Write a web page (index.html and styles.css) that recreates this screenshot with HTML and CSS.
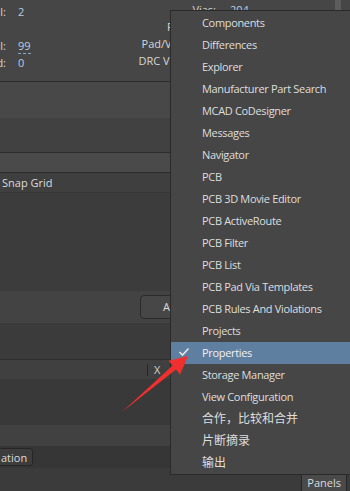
FILE: index.html
```html
<!DOCTYPE html>
<html lang="en">
<head>
  <meta charset="UTF-8">
  <meta name="viewport" content="width=device-width, initial-scale=1.0">
  <title>Panels</title>
  <link rel="stylesheet" href="styles.css">
</head>
<body>
  <div class="panel">
    <div class="info">
      <div class="info-left">
        <span class="label"></span><span class="value">--</span>
        <span class="label">Total:</span><span class="value">2</span>
        <span class="label"></span><span class="value"></span>
        <span class="label">Total:</span><span class="value"><span class="link">99</span></span>
        <span class="label">Routed:</span><span class="value">0</span>
      </div>
      <div class="info-right">
        <span class="label">Vias:</span><span class="value">204</span>
        <span class="label">Polygons:</span><span class="value"></span>
        <span class="label">Pad/Via Types:</span><span class="value"></span>
        <span class="label">DRC Violations:</span><span class="value"></span>
      </div>
      <div class="scroll-thumb"></div>
    </div>
    <div class="band band-a"></div>
    <div class="band band-b"></div>
    <div class="band section-head"></div>
    <div class="band snap-row">Snap Grid</div>
    <div class="band area"></div>
    <div class="band button-band">
      <div class="btn">Add</div>
    </div>
    <div class="band area2"></div>
    <div class="band input-row">
      <span class="input-sep"></span>
      <span class="input-clear">X</span>
    </div>
    <div class="band area3"></div>
    <div class="band band-c"></div>
    <div class="band tab-row">
      <div class="tab">ation</div>
    </div>
    <div class="status-bar">
      <div class="panels-btn">Panels</div>
    </div>
  </div>

  <!-- Panels popup menu -->
  <div class="menu">
    <div class="menu-item">Components</div>
    <div class="menu-item">Differences</div>
    <div class="menu-item">Explorer</div>
    <div class="menu-item">Manufacturer Part Search</div>
    <div class="menu-item">MCAD CoDesigner</div>
    <div class="menu-item">Messages</div>
    <div class="menu-item">Navigator</div>
    <div class="menu-item">PCB</div>
    <div class="menu-item">PCB 3D Movie Editor</div>
    <div class="menu-item">PCB ActiveRoute</div>
    <div class="menu-item">PCB Filter</div>
    <div class="menu-item">PCB List</div>
    <div class="menu-item">PCB Pad Via Templates</div>
    <div class="menu-item">PCB Rules And Violations</div>
    <div class="menu-item">Projects</div>
    <div class="menu-item checked">
      <svg class="check" width="12" height="10" viewBox="0 0 12 10">
        <polyline points="1.5,5 4.5,8 10.5,1.5" fill="none" stroke="#e6e6e6" stroke-width="1.6"/>
      </svg>
      Properties
    </div>
    <div class="menu-item">Storage Manager</div>
    <div class="menu-item">View Configuration</div>
    <div class="menu-item cjk">合作，比较和合并</div>
    <div class="menu-item cjk">片断摘录</div>
    <div class="menu-item cjk">输出</div>
  </div>

  <!-- 红色箭头标注 -->
  <svg class="arrow" width="350" height="491" viewBox="0 0 350 491">
    <polygon points="122,412 172.6,365.6 168.5,360.7 188,356 180.1,374.5 176,369.6" fill="#f0302e"/>
  </svg>
</body>
</html>
```

FILE: styles.css
```css
body {
  margin: 0;
  width: 350px;
  height: 491px;
  overflow: hidden;
  position: relative;
  background-color: #3b3b3b;
  font-family: "Open Sans", "Noto Sans", sans-serif;
  font-size: 11px;
  color: #dcdcdc;
}
.panel {
  display: flex;
  flex-direction: column;
  height: 491px;
}
.info {
  position: relative;
  display: flex;
  height: 81px;
  overflow: hidden;
  background-color: #464646;
  border-bottom: 1px solid #2c2c2c;
}
.info-left {
  display: grid;
  grid-template-columns: 50px 80px;
  grid-auto-rows: 17px;
  column-gap: 12px;
  align-items: center;
  margin-left: -44px;
  margin-top: -14px;
  width: 140px;
  flex-shrink: 0;
}
.info-right {
  display: grid;
  grid-template-columns: 90px 60px;
  grid-auto-rows: 17px;
  column-gap: 14px;
  align-items: center;
  margin-left: 30px;
  padding-top: 1px;
}
.label {
  text-align: right;
  white-space: nowrap;
  color: #d6d6d6;
}
.value {
  color: #b9cde2;
}
.link {
  border-bottom: 1px dashed #8aa7c6;
}
.scroll-thumb {
  position: absolute;
  right: 9px;
  top: 0;
  width: 6px;
  height: 20px;
  background-color: #5c5c5c;
}
.band {
  flex-shrink: 0;
}
.band-a {
  height: 36px;
  background-color: #484848;
}
.band-b {
  height: 34px;
  background-color: #414141;
  border-bottom: 1px solid #2c2c2c;
}
.section-head {
  height: 19px;
  background-color: #4a4a4a;
  border-bottom: 1px solid #2c2c2c;
}
.snap-row {
  height: 19px;
  line-height: 19px;
  padding-left: 2px;
  background-color: #3f3f3f;
  border-bottom: 1px solid #373737;
}
.area {
  height: 98px;
  background-color: #3c3c3c;
}
.button-band {
  height: 32px;
  background-color: #434343;
  display: flex;
  align-items: center;
  padding-left: 140px;
}
.btn {
  width: 100px;
  height: 24px;
  line-height: 22px;
  padding-left: 22px;
  box-sizing: border-box;
  border: 1px solid #2b2b2b;
  border-radius: 4px;
  background-color: #474747;
}
.area2 {
  height: 36px;
  background-color: #3b3b3b;
  border-bottom: 1px solid #2e2e2e;
}
.input-row {
  height: 19px;
  background-color: #404040;
  display: flex;
  align-items: center;
  padding-left: 147px;
}
.input-sep {
  width: 1px;
  height: 12px;
  background-color: #262626;
}
.input-clear {
  margin-left: 6px;
  color: #d0d0d0;
}
.area3 {
  height: 46px;
  background-color: #393939;
}
.band-c {
  height: 21px;
  background-color: #414141;
}
.tab-row {
  height: 22px;
  background-color: #363636;
  display: flex;
  align-items: center;
}
.tab {
  height: 18px;
  line-height: 18px;
  padding-left: 8px;
  margin-left: -8px;
  padding-right: 5px;
  box-sizing: border-box;
  border: 1px solid #262626;
  border-radius: 0 3px 3px 0;
  background-color: #3d3d3d;
}
.status-bar {
  flex: 1;
  display: flex;
  justify-content: flex-end;
  align-items: flex-end;
  padding-right: 3px;
  background-color: #3b3b3b;
}
.panels-btn {
  height: 16px;
  line-height: 15px;
  padding: 0 5px;
  border: 1px solid #262626;
  border-bottom: none;
  background-color: #4a4a4a;
}
.menu {
  position: absolute;
  left: 170px;
  top: 10px;
  width: 200px;
  height: 465px;
  box-sizing: border-box;
  padding-top: 1px;
  background-color: #464646;
  border: 1px solid #2a2a2a;
}
.menu-item {
  position: relative;
  height: 22px;
  line-height: 22px;
  padding-left: 31px;
  white-space: nowrap;
  letter-spacing: -0.33px;
  color: #dedede;
}
.menu-item.checked {
  background-color: #5f7fa0;
  color: #f0f0f0;
}
.menu-item.cjk {
  font-family: "Open Sans", "Noto Sans CJK SC", sans-serif;
  font-size: 12px;
  letter-spacing: 0;
}
.check {
  position: absolute;
  left: 7px;
  top: 5px;
}
.arrow {
  position: absolute;
  left: 0;
  top: 0;
  pointer-events: none;
}
```
